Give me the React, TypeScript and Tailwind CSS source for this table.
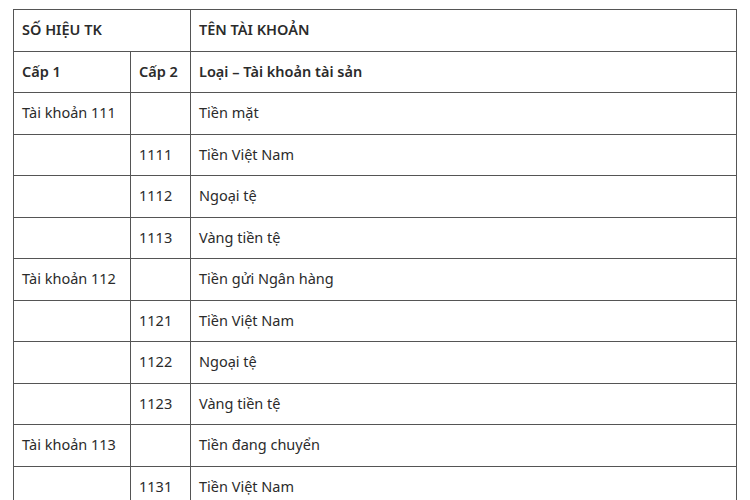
const ROWS: [string, string, string][] = [
  ["Tài khoản 111", "", "Tiền mặt"],
  ["", "1111", "Tiền Việt Nam"],
  ["", "1112", "Ngoại tệ"],
  ["", "1113", "Vàng tiền tệ"],
  ["Tài khoản 112", "", "Tiền gửi Ngân hàng"],
  ["", "1121", "Tiền Việt Nam"],
  ["", "1122", "Ngoại tệ"],
  ["", "1123", "Vàng tiền tệ"],
  ["Tài khoản 113", "", "Tiền đang chuyển"],
  ["", "1131", "Tiền Việt Nam"],
];

const cell = "border border-[#555] h-[41.5px] px-[8px] align-middle";

export default function App() {
  return (
    <div className="w-[750px] h-[500px] overflow-hidden bg-white pt-[9px] pl-[13px] font-['Noto_Sans',sans-serif] text-[14.5px] text-[#2b2b2b]">
      <table className="border-collapse w-[724px] table-fixed">
        <colgroup>
          <col className="w-[117px]" />
          <col className="w-[60px]" />
          <col />
        </colgroup>
        <tbody>
          <tr>
            <td colSpan={2} className={`${cell} font-semibold`}>SỐ HIỆU TK</td>
            <td className={`${cell} font-semibold`}>TÊN TÀI KHOẢN</td>
          </tr>
          <tr>
            <td className={`${cell} font-semibold`}>Cấp 1</td>
            <td className={`${cell} font-semibold`}>Cấp 2</td>
            <td className={`${cell} font-semibold`}>Loại – Tài khoản tài sản</td>
          </tr>
          {ROWS.map((r, i) => (
            <tr key={i}>
              <td className={cell}>{r[0]}</td>
              <td className={cell}>{r[1]}</td>
              <td className={cell}>{r[2]}</td>
            </tr>
          ))}
        </tbody>
      </table>
    </div>
  );
}
